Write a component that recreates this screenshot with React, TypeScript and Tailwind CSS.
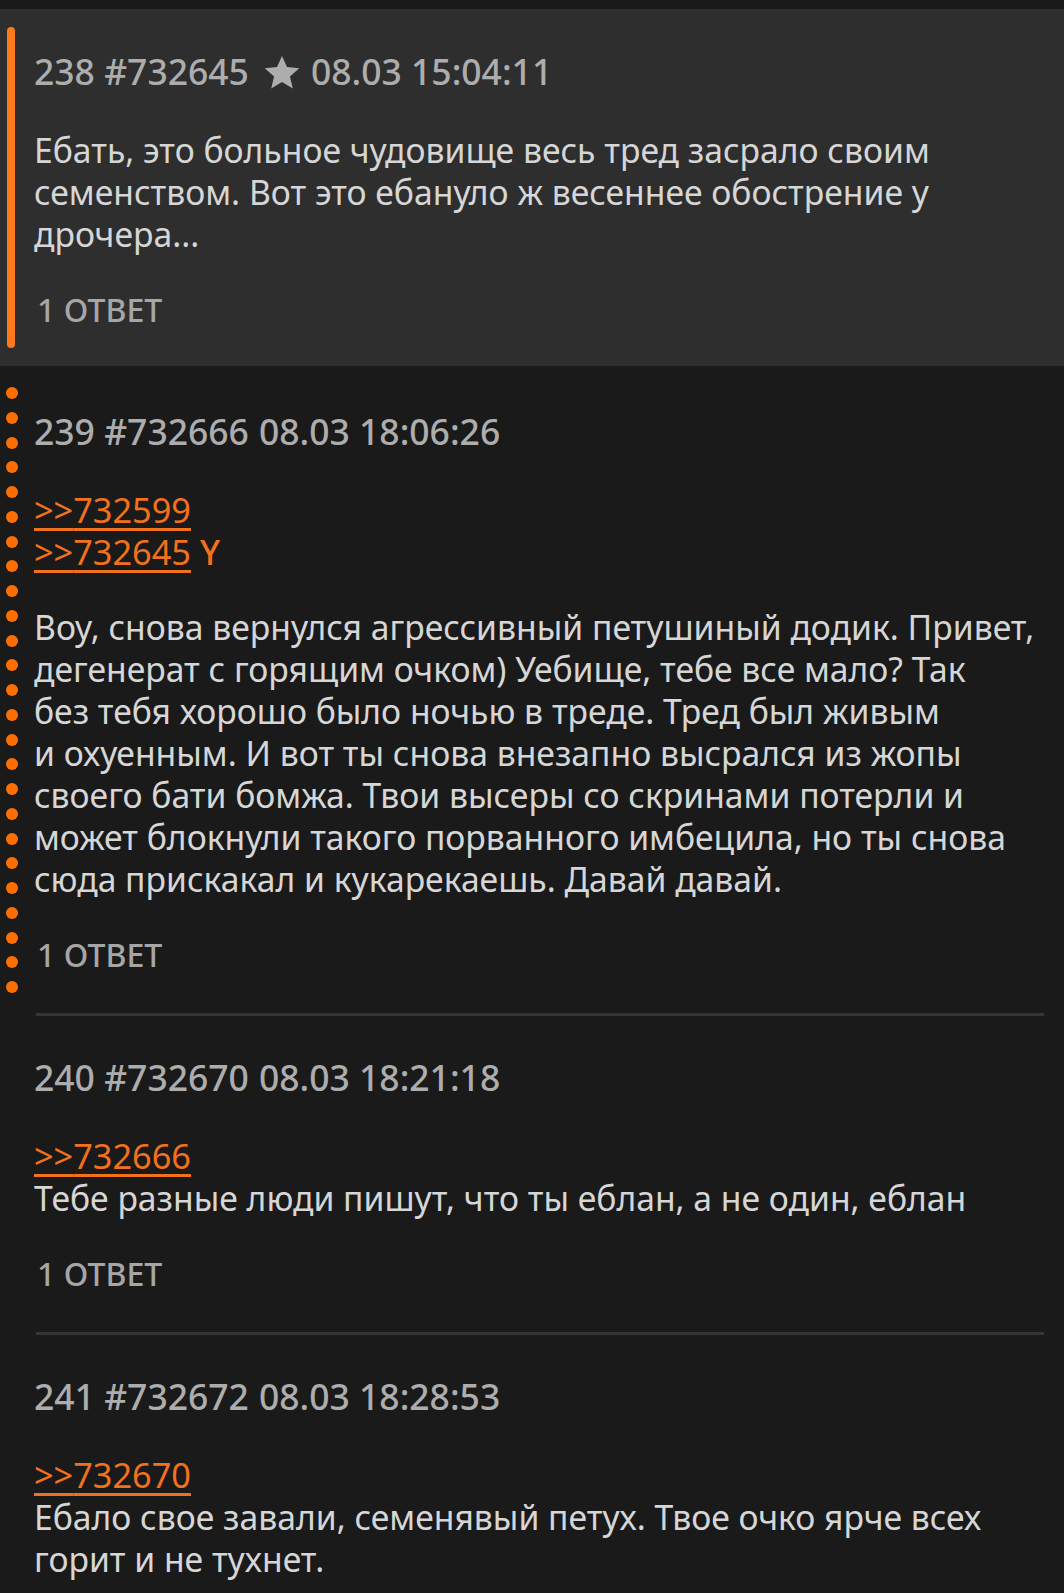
import React from "react";

type Post = {
  num: number;
  id: string;
  date: string;
  star?: boolean;
  links: string[];
  tag?: string;
  gap?: boolean;
  lines: string[];
  replies: number;
  marker: "bar" | "dots" | "none";
};

const posts: Post[] = [
  {
    num: 238,
    id: "732645",
    date: "08.03 15:04:11",
    star: true,
    links: [],
    lines: [
      "Ебать, это больное чудовище весь тред засрало своим",
      "семенством. Вот это ебануло ж весеннее обострение у",
      "дрочера...",
    ],
    replies: 1,
    marker: "bar",
  },
  {
    num: 239,
    id: "732666",
    date: "08.03 18:06:26",
    links: ["732599", "732645"],
    tag: "Y",
    gap: true,
    lines: [
      "Воу, снова вернулся агрессивный петушиный додик. Привет,",
      "дегенерат с горящим очком) Уебище, тебе все мало? Так",
      "без тебя хорошо было ночью в треде. Тред был живым",
      "и охуенным. И вот ты снова внезапно высрался из жопы",
      "своего бати бомжа. Твои высеры со скринами потерли и",
      "может блокнули такого порванного имбецила, но ты снова",
      "сюда прискакал и кукарекаешь. Давай давай.",
    ],
    replies: 1,
    marker: "dots",
  },
  {
    num: 240,
    id: "732670",
    date: "08.03 18:21:18",
    links: ["732666"],
    lines: ["Тебе разные люди пишут, что ты еблан, а не один, еблан"],
    replies: 1,
    marker: "none",
  },
  {
    num: 241,
    id: "732672",
    date: "08.03 18:28:53",
    links: ["732670"],
    lines: [
      "Ебало свое завали, семенявый петух. Твое очко ярче всех",
      "горит и не тухнет.",
    ],
    replies: 0,
    marker: "none",
  },
];

function Star() {
  return (
    <svg width="36" height="35" viewBox="0 0 24 23" className="ml-[15px] mr-[11px] shrink-0">
      <path
        d="M12 0.5l3.3 7.4 8.2.8-6.2 5.4 1.9 8.1L12 17.9l-7.2 4.3 1.9-8.1L.5 8.7l8.2-.8z"
        fill="#adadad"
      />
    </svg>
  );
}

function Dots() {
  const dots = Array.from({ length: 25 });
  return (
    <div className="flex flex-col gap-[12.75px] pl-[6px] pt-[21px]">
      {dots.map((_, i) => (
        <div key={i} className="w-[12px] h-[12px] rounded-full bg-[#ff6f00]" />
      ))}
    </div>
  );
}

function PostItem({ post, last }: { post: Post; last: boolean }) {
  return (
    <div
      className={
        post.marker === "bar" ? "flex bg-[#2e2e2e]" : "flex bg-[#1a1a1a]"
      }>
      <div className="w-[34px] shrink-0">
        {post.marker === "bar" ? (
          <div className="pl-[7px] pt-[18px] pb-[18px] h-full">
            <div className="w-[8px] h-full rounded-full bg-[#ff7a1a]" />
          </div>
        ) : post.marker === "dots" ? (
          <Dots />
        ) : (
          <></>
        )}
      </div>
      <div
        className={
          post.marker === "bar"
            ? "flex-1 pt-[42px] pb-[35px]"
            : post.marker === "dots"
            ? "flex-1 pt-[45px]"
            : "flex-1 pt-[41px]"
        }>
        <div className="flex items-center h-[42px] text-[#adadad] text-[35.5px] font-medium whitespace-nowrap">
          <span>
            {post.num} #{post.id}
          </span>
          {post.star ? <Star /> : <span className="w-[10px]" />}
          <span>{post.date}</span>
        </div>
        <div className="mt-[36px] text-[33.7px] leading-[42px] whitespace-nowrap">
          {post.links.map((l, i) => (
            <div key={l} className="h-[42px] leading-[42px] text-[#f2711c] text-[34.3px]">
              <span className="underline decoration-[3px] underline-offset-[5px]">
                &gt;&gt;{l}
              </span>
              {post.tag && i === post.links.length - 1 ? (
                <span className="font-medium"> {post.tag}</span>
              ) : (
                <></>
              )}
            </div>
          ))}
          <div className={post.gap ? "mt-[33px] text-[#d6d6d6]" : "text-[#d6d6d6]"}>
            {post.lines.map((line) => (
              <div key={line}>{line}</div>
            ))}
          </div>
        </div>
        {post.replies > 0 ? (
          <div className="mt-[34px] ml-[3px] h-[42px] leading-[42px] text-[32px] font-medium text-[#a6a6a6]">
            {post.replies} ОТВЕТ
          </div>
        ) : (
          <></>
        )}
        {post.marker !== "bar" && !last ? (
          <div className="mt-[37px] ml-[2px] mr-[20px] h-[3px] bg-[#353535]" />
        ) : (
          <></>
        )}
      </div>
    </div>
  );
}

export default function App() {
  return (
    <div
      className="w-[1064px] h-[1593px] overflow-hidden bg-[#1a1a1a] pt-[9px]"
      style={{ fontFamily: '"Noto Sans", sans-serif' }}>
      {posts.map((p, i) => (
        <PostItem key={p.id} post={p} last={i === posts.length - 1} />
      ))}
    </div>
  );
}
